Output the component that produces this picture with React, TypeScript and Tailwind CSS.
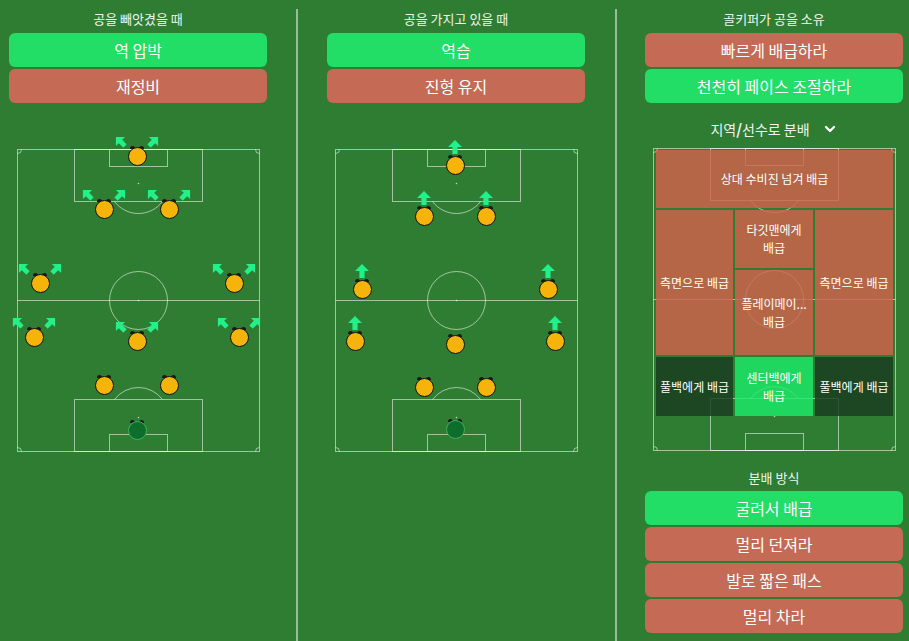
import React from 'react';
import { ChevronDown } from 'lucide-react';

type Arrow = 'diag' | 'up';
type Player = { x: number; y: number; arrow?: Arrow; gk?: boolean };

const pressPlayers: Player[] = [
  { x: 120, y: 7, arrow: 'diag' },
  { x: 87, y: 60, arrow: 'diag' },
  { x: 152, y: 60, arrow: 'diag' },
  { x: 23, y: 134, arrow: 'diag' },
  { x: 217, y: 134, arrow: 'diag' },
  { x: 17, y: 188, arrow: 'diag' },
  { x: 120, y: 192, arrow: 'diag' },
  { x: 222, y: 188, arrow: 'diag' },
  { x: 87, y: 236 },
  { x: 152, y: 236 },
  { x: 120, y: 281, gk: true },
];

const attackPlayers: Player[] = [
  { x: 120, y: 16, arrow: 'up' },
  { x: 89, y: 67, arrow: 'up' },
  { x: 151, y: 67, arrow: 'up' },
  { x: 27, y: 140, arrow: 'up' },
  { x: 213, y: 140, arrow: 'up' },
  { x: 20, y: 192, arrow: 'up' },
  { x: 120, y: 195 },
  { x: 220, y: 192, arrow: 'up' },
  { x: 89, y: 238 },
  { x: 151, y: 238 },
  { x: 120, y: 280, gk: true },
];

const PitchLines = () => (
  <svg
    width="243"
    height="303"
    viewBox="0 0 243 303"
    className="absolute inset-0"
    fill="none"
    stroke="rgba(255,255,255,0.55)"
    strokeWidth="1"
  >
    <rect x="0.5" y="0.5" width="242" height="302" />
    <line x1="0.5" y1="151.5" x2="242.5" y2="151.5" />
    <circle cx="121.5" cy="151.5" r="29" />
    <circle cx="121.5" cy="151.5" r="0.8" fill="rgba(255,255,255,0.7)" stroke="none" />
    <rect x="57.5" y="0.5" width="128" height="52" />
    <rect x="92.5" y="0.5" width="58" height="17" />
    <path d="M 97.5 52.5 A 30 30 0 0 0 145.5 52.5" />
    <circle cx="121.5" cy="34.5" r="0.8" fill="rgba(255,255,255,0.7)" stroke="none" />
    <rect x="57.5" y="250.5" width="128" height="52" />
    <rect x="92.5" y="285.5" width="58" height="17" />
    <path d="M 97.5 250.5 A 30 30 0 0 1 145.5 250.5" />
    <circle cx="121.5" cy="268.5" r="0.8" fill="rgba(255,255,255,0.7)" stroke="none" />
    <path d="M 0.5 4.5 A 4 4 0 0 0 4.5 0.5" />
    <path d="M 238.5 0.5 A 4 4 0 0 0 242.5 4.5" />
    <path d="M 4.5 302.5 A 4 4 0 0 0 0.5 298.5" />
    <path d="M 242.5 298.5 A 4 4 0 0 0 238.5 302.5" />
  </svg>
);

const ArrowIcon = ({ size }: { size: number }) => (
  <svg width={size} height={size} viewBox="0 0 13 13">
    <polygon points="6.5,0 13,6.5 8.9,6.5 8.9,13 4.1,13 4.1,6.5 0,6.5" fill="#22f08a" />
  </svg>
);

const PlayerDot = ({ p }: { p: Player }) => (
  <>
    {p.arrow === 'up' && (
      <div className="absolute" style={{ left: p.x - 7, top: p.y - 25 }}>
        <ArrowIcon size={14} />
      </div>
    )}
    {p.arrow === 'diag' && (
      <>
        <div className="absolute -rotate-45" style={{ left: p.x - 23.5, top: p.y - 21 }}>
          <ArrowIcon size={13} />
        </div>
        <div className="absolute rotate-45" style={{ left: p.x + 9.5, top: p.y - 21 }}>
          <ArrowIcon size={13} />
        </div>
      </>
    )}
    <span
      className="absolute w-[5px] h-[3px] rounded-t-full bg-[#1a1a1a]"
      style={{ left: p.x - 7, top: p.y - 10 }}
    />
    <span
      className="absolute w-[5px] h-[3px] rounded-t-full bg-[#1a1a1a]"
      style={{ left: p.x + 2, top: p.y - 10 }}
    />
    <div
      className={
        p.gk
          ? 'absolute w-[19px] h-[19px] rounded-full bg-[#0d6e2c] border-[1.5px] border-[#3fae5e]'
          : 'absolute w-[19px] h-[19px] rounded-full bg-[#f6b40b] border-[1.5px] border-[#141414]'
      }
      style={{ left: p.x - 9.5, top: p.y - 9.5 }}
    />
  </>
);

const Pitch = ({ players, children }: { players?: Player[]; children?: React.ReactNode }) => (
  <div className="relative w-[243px] h-[303px] ml-[8px]">
    <PitchLines />
    {children}
    {players?.map((p, i) => <PlayerDot key={i} p={p} />)}
  </div>
);

const OptionButton = ({ label, active }: { label: string; active?: boolean }) => (
  <div
    className={`h-[34px] rounded-md flex items-center justify-center text-[16px] text-white ${
      active ? 'bg-[#22dd66]' : 'bg-[#c46a55]'
    }`}
  >
    {label}
  </div>
);

const Heading = ({ children }: { children: React.ReactNode }) => (
  <div className="h-[20px] flex items-center justify-center text-[13px] text-[#eef5ee]">{children}</div>
);

const Zone = ({ tone, children, className = '' }: { tone: 'red' | 'dark' | 'green'; children: React.ReactNode; className?: string }) => {
  const bg =
    tone === 'red'
      ? 'bg-[rgba(214,96,76,0.8)]'
      : tone === 'dark'
      ? 'bg-[rgba(25,60,30,0.82)]'
      : 'bg-[rgba(28,236,106,0.8)]';
  return (
    <div className={`${bg} flex flex-col items-center justify-center text-center text-[12px] leading-[18px] text-white ${className}`}>
      {children}
    </div>
  );
};

const Divider = () => <div className="w-[2px] mt-[9px] bg-white/50 self-stretch" />;

export default function App() {
  return (
    <div className="w-[909px] h-[641px] bg-[#2e7d32] flex font-['Noto_Sans_CJK_KR','Noto_Sans',sans-serif] overflow-hidden">
      <div className="w-[296px] pl-[9px] pr-[29px] pt-[9px]">
        <Heading>공을 빼앗겼을 때</Heading>
        <div className="mt-[4px] flex flex-col gap-[2px]">
          <OptionButton label="역 압박" active />
          <OptionButton label="재정비" />
        </div>
        <div className="mt-[46px]">
          <Pitch players={pressPlayers} />
        </div>
      </div>
      <Divider />
      <div className="w-[317px] pl-[29px] pr-[30px] pt-[9px]">
        <Heading>공을 가지고 있을 때</Heading>
        <div className="mt-[4px] flex flex-col gap-[2px]">
          <OptionButton label="역습" active />
          <OptionButton label="진형 유지" />
        </div>
        <div className="mt-[46px]">
          <Pitch players={attackPlayers} />
        </div>
      </div>
      <Divider />
      <div className="flex-1 pl-[28px] pr-[6px] pt-[9px]">
        <Heading>골키퍼가 공을 소유</Heading>
        <div className="mt-[4px] flex flex-col gap-[2px]">
          <OptionButton label="빠르게 배급하라" />
          <OptionButton label="천천히 페이스 조절하라" active />
        </div>
        <div className="mt-[16px] h-[20px] flex items-center justify-center gap-[12px] text-[14px] text-[#eef5ee]">
          <span>
            지역<span className="font-bold text-[15px]">/</span>선수로 분배
          </span>
          <ChevronDown size={16} strokeWidth={3.5} className="text-white" />
        </div>
        <div className="mt-[9px]">
          <Pitch>
            <div className="absolute left-[3px] top-[2px] w-[237px] h-[266px] grid grid-cols-[77px_78px_78px] grid-rows-[58px_145px_59px] gap-[2px]">
              <Zone tone="red" className="col-span-3">
                상대 수비진 넘겨 배급
              </Zone>
              <Zone tone="red">측면으로 배급</Zone>
              <div className="flex flex-col gap-[2px]">
                <Zone tone="red" className="h-[58px]">
                  <span>타깃맨에게</span>
                  <span>배급</span>
                </Zone>
                <Zone tone="red" className="flex-1">
                  <span>플레이메이...</span>
                  <span>배급</span>
                </Zone>
              </div>
              <Zone tone="red">측면으로 배급</Zone>
              <Zone tone="dark">풀백에게 배급</Zone>
              <Zone tone="green">
                <span>센터백에게</span>
                <span>배급</span>
              </Zone>
              <Zone tone="dark">풀백에게 배급</Zone>
            </div>
          </Pitch>
        </div>
        <div className="mt-[17px]">
          <Heading>분배 방식</Heading>
        </div>
        <div className="mt-[3px] flex flex-col gap-[2px]">
          <OptionButton label="굴려서 배급" active />
          <OptionButton label="멀리 던져라" />
          <OptionButton label="발로 짧은 패스" />
          <OptionButton label="멀리 차라" />
        </div>
      </div>
    </div>
  );
}
